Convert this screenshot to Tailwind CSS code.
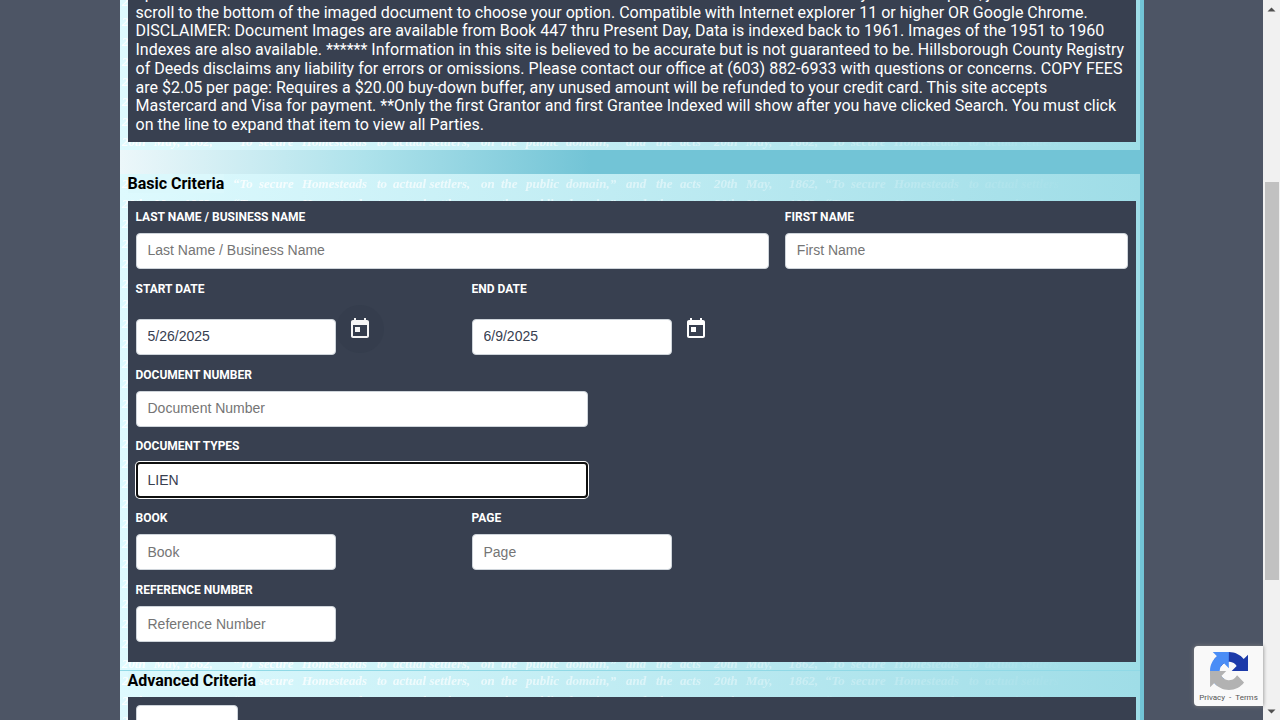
<!DOCTYPE html>
<html lang="en">
<head>
<meta charset="utf-8">
<meta name="viewport" content="width=device-width, initial-scale=1">
<title>Registry of Deeds Search</title>
<script src="https://cdn.jsdelivr.net/npm/@tailwindcss/browser@4"></script>
</head>
<body class="relative flex h-screen overflow-hidden bg-[#4d5565] font-[Roboto,sans-serif] text-base">
<svg class="absolute size-0" aria-hidden="true">
  <defs>
    <linearGradient id="fade" gradientUnits="userSpaceOnUse" x1="0" y1="0" x2="1016" y2="0">
      <stop offset="0" stop-color="#fff" stop-opacity=".9"/>
      <stop offset=".4" stop-color="#fff" stop-opacity=".6"/>
      <stop offset=".95" stop-color="#fff" stop-opacity="0"/>
    </linearGradient>
    <pattern id="script" width="1100" height="20" patternUnits="userSpaceOnUse">
      <g fill="url(#fade)" font-family="Liberation Serif, serif" font-style="italic" font-weight="700" font-size="13">
        <text x="2" y="14">20th</text>
        <text x="34" y="14">May, 1862,</text>
        <text x="113" y="14">“To</text>
        <text x="139" y="14">secure</text>
        <text x="182" y="14">Homesteads</text>
        <text x="257" y="14">to</text>
        <text x="273" y="14">actual settlers,</text>
        <text x="361" y="14">on</text>
        <text x="381" y="14">the</text>
        <text x="406" y="14">public</text>
        <text x="446" y="14">domain,”</text>
        <text x="506" y="14">and</text>
        <text x="536" y="14">the</text>
        <text x="560" y="14">acts</text>
        <text x="594" y="14">20th</text>
        <text x="626" y="14">May,</text>
        <text x="669" y="14">1862,</text>
        <text x="705" y="14">“To</text>
        <text x="731" y="14">secure</text>
        <text x="774" y="14">Homesteads</text>
        <text x="849" y="14">to</text>
        <text x="865" y="14">actual settlers</text>
      </g>
    </pattern>
  </defs>
</svg>
<main class="h-full min-w-0 flex-1 overflow-hidden">
  <div class="mx-auto min-h-full max-w-5xl bg-linear-to-r from-[#ecf7fa] via-[#ade2eb] via-24% to-[#72c4d6] to-46% pr-1">
    <section class="relative isolate -mt-4 bg-linear-to-r from-[#defafe] to-[#9fdde7] pr-1 pb-2 pl-2">
      <svg class="absolute inset-0 -z-10 size-full" aria-hidden="true"><g transform="translate(0 8)"><rect width="100%" height="100%" fill="url(#script)"/></g></svg>
      <p class="bg-[#384050] px-2 pt-px pb-[7px] leading-[1.17] text-white">option on the left side of the main menu. When a document or an index of documents is chosen and if you want to print, just click on it and scroll to the bottom of the imaged document to choose your option. Compatible with Internet explorer 11 or higher OR Google Chrome. DISCLAIMER: Document Images are available from Book 447 thru Present Day, Data is indexed back to 1961. Images of the 1951 to 1960 Indexes are also available. ****** Information in this site is believed to be accurate but is not guaranteed to be. Hillsborough County Registry of Deeds disclaims any liability for errors or omissions. Please contact our office at (603) 882-6933 with questions or concerns. COPY FEES are $2.05 per page: Requires a $20.00 buy-down buffer, any unused amount will be refunded to your credit card. This site accepts Mastercard and Visa for payment. **Only the first Grantor and first Grantee Indexed will show after you have clicked Search. You must click on the line to expand that item to view all Parties.</p>
    </section>

    <section class="relative isolate mt-6 bg-linear-to-r from-[#defafe] to-[#9fdde7] pr-1 pb-2 pl-2">
      <svg class="absolute inset-0 -z-10 size-full" aria-hidden="true"><rect width="100%" height="100%" fill="url(#script)"/></svg>
      <h2 class="h-[27px] leading-5 font-bold text-black"><span class="bg-[#dbf8fc]">Basic Criteria</span></h2>
      <form class="bg-[#384050] px-2 pt-2 pb-5 text-xs leading-4 font-bold text-white">
        <div class="mb-3 flex gap-4">
          <div class="flex min-w-0 flex-[634] flex-col gap-2">
            <label for="last">LAST NAME / BUSINESS NAME</label>
            <input id="last" type="text" placeholder="Last Name / Business Name" class="h-9 w-full rounded border border-[#ced4da] bg-white px-[11px] pb-0.5 font-['Liberation_Sans',sans-serif] text-sm font-normal text-[#384050] placeholder:text-[#757575]">
          </div>
          <div class="flex min-w-0 flex-[343] flex-col gap-2">
            <label for="first">FIRST NAME</label>
            <input id="first" type="text" placeholder="First Name" class="h-9 w-full rounded border border-[#ced4da] bg-white px-[11px] pb-0.5 font-['Liberation_Sans',sans-serif] text-sm font-normal text-[#384050] placeholder:text-[#757575]">
          </div>
        </div>
        <div class="mb-3 flex">
          <div class="w-[336px]">
            <label for="start" class="block">START DATE</label>
            <div class="flex h-[58px] items-end">
              <input id="start" type="text" value="5/26/2025" class="h-9 w-[200px] rounded border border-[#ced4da] bg-white px-[11px] pb-0.5 font-['Liberation_Sans',sans-serif] text-sm font-normal text-[#384050]">
              <button type="button" aria-label="Choose start date" class="mb-0.5 flex size-12 items-center justify-center rounded-full bg-[#353d4d] text-[#f5f5f5]">
                <svg class="size-6" viewBox="0 0 24 24" fill="currentColor"><path d="M19 3h-1V1h-2v2H8V1H6v2H5c-1.110 0-1.990.9-1.990 2L3 19c0 1.100.89 2 2 2h14c1.100 0 2-.9 2-2V5c0-1.100-.9-2-2-2zm0 16H5V8h14v11zM7 10h5v5H7z"/></svg>
              </button>
            </div>
          </div>
          <div class="w-[336px]">
            <label for="end" class="block">END DATE</label>
            <div class="flex h-[58px] items-end">
              <input id="end" type="text" value="6/9/2025" class="h-9 w-[200px] rounded border border-[#ced4da] bg-white px-[11px] pb-0.5 font-['Liberation_Sans',sans-serif] text-sm font-normal text-[#384050]">
              <button type="button" aria-label="Choose end date" class="mb-0.5 flex size-12 items-center justify-center rounded-full text-white">
                <svg class="size-6" viewBox="0 0 24 24" fill="currentColor"><path d="M19 3h-1V1h-2v2H8V1H6v2H5c-1.110 0-1.990.9-1.990 2L3 19c0 1.100.89 2 2 2h14c1.100 0 2-.9 2-2V5c0-1.100-.9-2-2-2zm0 16H5V8h14v11zM7 10h5v5H7z"/></svg>
              </button>
            </div>
          </div>
        </div>
        <div class="mb-[11px] flex flex-col gap-2">
          <label for="docnum">DOCUMENT NUMBER</label>
          <input id="docnum" type="text" placeholder="Document Number" class="h-9 w-[452px] rounded border border-[#ced4da] bg-white px-[11px] pb-0.5 font-['Liberation_Sans',sans-serif] text-sm font-normal text-[#384050] placeholder:text-[#757575]">
        </div>
        <div class="mb-3 flex flex-col gap-2">
          <label for="doctype">DOCUMENT TYPES</label>
          <input id="doctype" type="text" value="LIEN" class="h-9 w-[452px] rounded border-2 border-[#101010] bg-white px-2.5 font-['Liberation_Sans',sans-serif] text-sm font-normal text-[#384050] ring-1 ring-white outline-none">
        </div>
        <div class="mb-3 flex">
          <div class="flex w-[336px] flex-col gap-2">
            <label for="book">BOOK</label>
            <input id="book" type="text" placeholder="Book" class="h-9 w-[200px] rounded border border-[#ced4da] bg-white px-[11px] font-['Liberation_Sans',sans-serif] text-sm font-normal text-[#384050] placeholder:text-[#757575]">
          </div>
          <div class="flex w-[336px] flex-col gap-2">
            <label for="page">PAGE</label>
            <input id="page" type="text" placeholder="Page" class="h-9 w-[200px] rounded border border-[#ced4da] bg-white px-[11px] font-['Liberation_Sans',sans-serif] text-sm font-normal text-[#384050] placeholder:text-[#757575]">
          </div>
        </div>
        <div class="flex flex-col gap-2">
          <label for="ref">REFERENCE NUMBER</label>
          <input id="ref" type="text" placeholder="Reference Number" class="h-9 w-[200px] rounded border border-[#ced4da] bg-white px-[11px] font-['Liberation_Sans',sans-serif] text-sm font-normal text-[#384050] placeholder:text-[#757575]">
        </div>
      </form>
    </section>

    <section class="relative isolate border-t border-[#90d9e6] bg-linear-to-r from-[#defafe] to-[#9fdde7] pr-1 pb-2 pl-2">
      <svg class="absolute inset-0 -z-10 size-full" aria-hidden="true"><rect width="100%" height="100%" fill="url(#script)"/></svg>
      <h2 class="h-[26px] leading-5 font-bold text-black"><span class="bg-[#dbf8fc]">Advanced Criteria</span></h2>
      <div class="bg-[#384050] p-2">
        <input type="text" aria-label="Advanced criteria" class="block h-9 w-[102px] rounded border border-[#ced4da] bg-white px-3">
      </div>
    </section>
  </div>
</main>

<aside class="absolute right-[17px] bottom-[14px] flex h-15 w-[69px] flex-col items-center rounded-l-sm bg-[#f9f9f9] pt-1.5 shadow-[0_0_4px_#808080]">
  <svg class="size-[38px]" viewBox="0 0 64 64" aria-hidden="true">
    <path fill="#1c3aa9" d="M64 31.955c0-.46-.011-.918-.032-1.373V4.652l-7.173 7.173C50.937 4.640 42.020.046 32.033.046c-10.393 0-19.626 4.975-25.459 12.680l11.757 11.878a15.575 15.575 0 0 1 4.761-5.342c2.053-1.602 4.963-2.912 8.941-2.912.48 0 .851.056 1.124.162 4.928.389 9.200 3.108 11.715 7.055l-8.322 8.320c10.541-.041 22.449-.066 27.450.068"/>
    <path fill="#4a8df6" d="M31.862.094c-.46.004-.918.011-1.373.033H4.637l7.151 7.152C4.624 13.113.043 22.004.043 31.960c0 10.362 4.960 19.568 12.642 25.384L24.528 45.620a15.529 15.529 0 0 1-5.326-4.748c-1.598-2.047-2.904-4.949-2.904-8.914 0-.479.056-.849.162-1.121.388-4.913 3.098-9.172 7.034-11.680l8.295 8.297c-.04-10.510-.067-22.384.073-27.360"/>
    <path fill="#b2b2b2" d="M.045 31.930c.004.46.011.917.033 1.372v25.936l7.151-7.151c5.835 7.164 14.725 11.745 24.681 11.745 10.361 0 19.567-4.960 25.384-12.643L45.573 39.346a15.530 15.530 0 0 1-4.747 5.326c-2.048 1.598-4.950 2.904-8.915 2.904-.479 0-.848-.056-1.120-.162-4.913-.388-9.172-3.098-11.681-7.034l8.297-8.296c-10.509.041-22.384.067-27.360-.072"/>
  </svg>
  <div class="flex gap-1 text-[8px] leading-4 text-[#555]"><a href="#">Privacy</a><span>-</span><a href="#">Terms</a></div>
</aside>

<div class="flex w-[17px] shrink-0 flex-col items-center bg-[#f1f1f1]" aria-hidden="true">
  <svg class="h-[17px] w-[17px]" viewBox="0 0 17 17"><path fill="#505050" d="M4.500 11.500h8l-4-4z"/></svg>
  <div class="mt-[165px] h-[398px] w-[14px] bg-[#c1c1c1]"></div>
  <svg class="mt-auto h-[17px] w-[17px]" viewBox="0 0 17 17"><path fill="#505050" d="M4.500 6.500h8l-4 4z"/></svg>
</div>
</body>
</html>
